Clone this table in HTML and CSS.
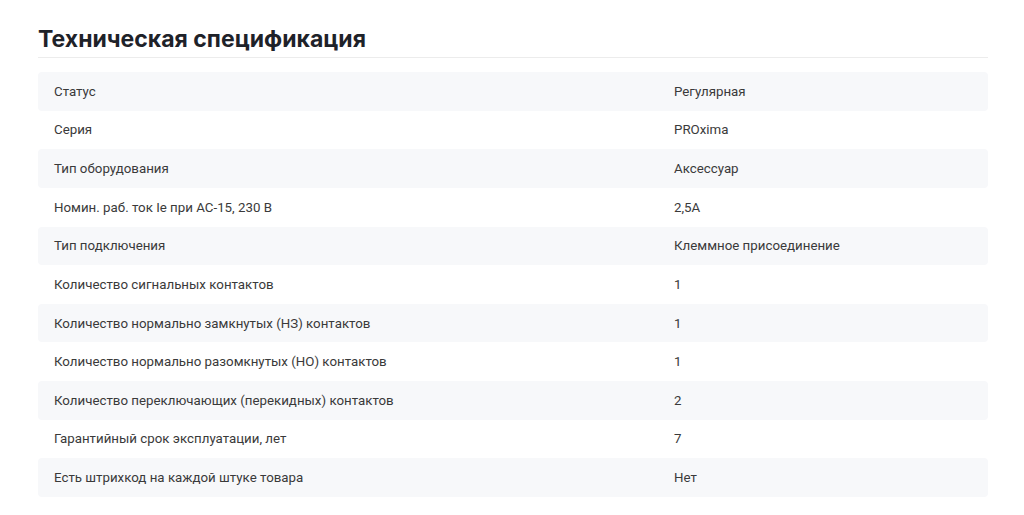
FILE: index.html
```html
<!DOCTYPE html>
<html lang="ru">
<head>
<meta charset="utf-8">
<link rel="stylesheet" href="styles.css">
</head>
<body>
<section class="spec">
  <h2 class="spec-title">Техническая спецификация</h2>
  <div class="spec-table">
    <div class="row"><div class="cell name">Статус</div><div class="cell val">Регулярная</div></div>
    <div class="row"><div class="cell name">Серия</div><div class="cell val">PROxima</div></div>
    <div class="row"><div class="cell name">Тип оборудования</div><div class="cell val">Аксессуар</div></div>
    <div class="row"><div class="cell name">Номин. раб. ток Ie при AC-15, 230 В</div><div class="cell val">2,5A</div></div>
    <div class="row"><div class="cell name">Тип подключения</div><div class="cell val">Клеммное присоединение</div></div>
    <div class="row"><div class="cell name">Количество сигнальных контактов</div><div class="cell val">1</div></div>
    <div class="row"><div class="cell name">Количество нормально замкнутых (НЗ) контактов</div><div class="cell val">1</div></div>
    <div class="row"><div class="cell name">Количество нормально разомкнутых (НО) контактов</div><div class="cell val">1</div></div>
    <div class="row"><div class="cell name">Количество переключающих (перекидных) контактов</div><div class="cell val">2</div></div>
    <div class="row"><div class="cell name">Гарантийный срок эксплуатации, лет</div><div class="cell val">7</div></div>
    <div class="row"><div class="cell name">Есть штрихкод на каждой штуке товара</div><div class="cell val">Нет</div></div>
  </div>
</section>
</body>
</html>
```

FILE: styles.css
```css
html, body {
  margin: 0;
  padding: 0;
  background: #ffffff;
}
body {
  font-family: Roboto, "Liberation Sans", Arial, sans-serif;
  color: #3a3a3a;
}
.spec {
  padding: 22px 36px 0 38px;
}
.spec-title {
  margin: 0;
  font-family: Inter, Roboto, "Liberation Sans", Arial, sans-serif;
  font-size: 23px;
  font-weight: 700;
  line-height: 34px;
  color: #1e2229;
  padding-bottom: 1px;
  border-bottom: 1px solid #ececec;
}
.spec-table {
  margin-top: 14px;
  display: flex;
  flex-direction: column;
}
.row {
  display: grid;
  grid-template-columns: 620px 1fr;
  height: 38.64px;
  align-items: center;
  border-radius: 4px;
  font-size: 13.3px;
  color: #3a3a3a;
}
.row:nth-child(odd) {
  background: #f7f8fa;
}
.cell {
  padding: 0 16px;
}
```
